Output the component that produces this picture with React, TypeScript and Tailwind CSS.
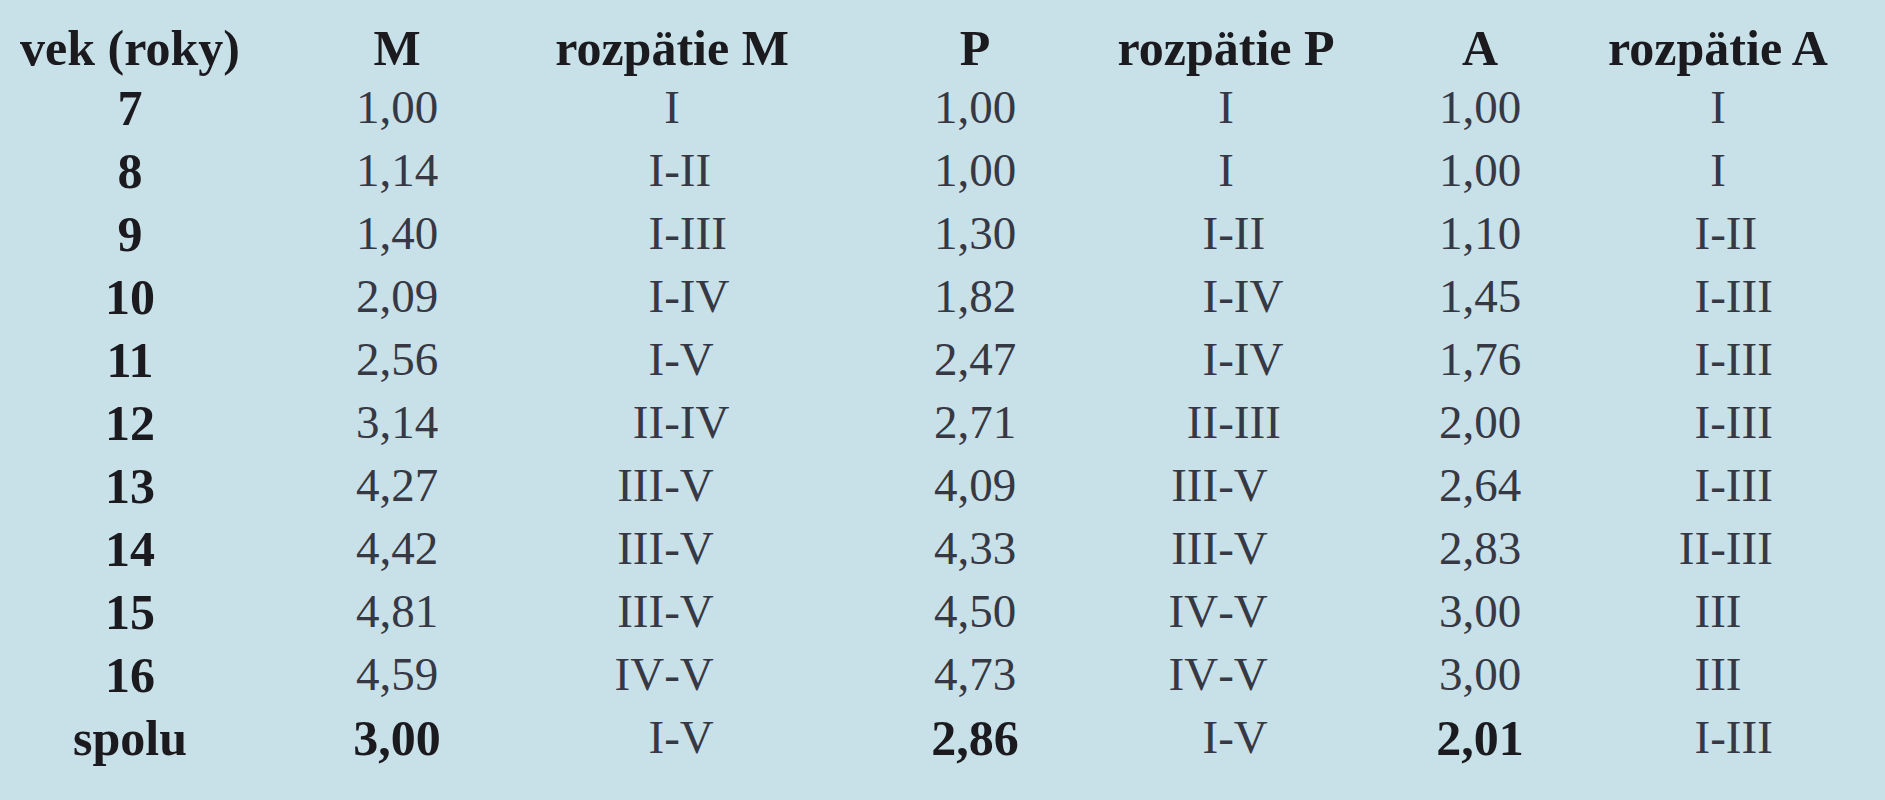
const rows = [
  { age: '7', m: '1,00', rm: ['I'], p: '1,00', rp: ['I'], a: '1,00', ra: ['I'] },
  { age: '8', m: '1,14', rm: ['I', 'II'], p: '1,00', rp: ['I'], a: '1,00', ra: ['I'] },
  { age: '9', m: '1,40', rm: ['I', 'III'], p: '1,30', rp: ['I', 'II'], a: '1,10', ra: ['I', 'II'] },
  { age: '10', m: '2,09', rm: ['I', 'IV'], p: '1,82', rp: ['I', 'IV'], a: '1,45', ra: ['I', 'III'] },
  { age: '11', m: '2,56', rm: ['I', 'V'], p: '2,47', rp: ['I', 'IV'], a: '1,76', ra: ['I', 'III'] },
  { age: '12', m: '3,14', rm: ['II', 'IV'], p: '2,71', rp: ['II', 'III'], a: '2,00', ra: ['I', 'III'] },
  { age: '13', m: '4,27', rm: ['III', 'V'], p: '4,09', rp: ['III', 'V'], a: '2,64', ra: ['I', 'III'] },
  { age: '14', m: '4,42', rm: ['III', 'V'], p: '4,33', rp: ['III', 'V'], a: '2,83', ra: ['II', 'III'] },
  { age: '15', m: '4,81', rm: ['III', 'V'], p: '4,50', rp: ['IV', 'V'], a: '3,00', ra: ['III'] },
  { age: '16', m: '4,59', rm: ['IV', 'V'], p: '4,73', rp: ['IV', 'V'], a: '3,00', ra: ['III'] },
];

const total = { age: 'spolu', m: '3,00', rm: ['I', 'V'], p: '2,86', rp: ['I', 'V'], a: '2,01', ra: ['I', 'III'] };

const Cell = ({ children, bold }: { children: React.ReactNode; bold?: boolean }) => (
  <div
    className={`flex items-center justify-center whitespace-nowrap leading-none ${
      bold ? 'font-bold text-[50px] text-[#1b1a1f]' : 'text-[47px] text-[#363844]'
    }`}
  >
    {children}
  </div>
);

// ranges are lined up on the hyphen
const Range = ({ parts }: { parts: string[] }) => (
  <div className="flex items-center justify-center whitespace-nowrap leading-none text-[47px] text-[#363844]">
    {parts.length === 1 ? (
      <span>{parts[0]}</span>
    ) : (
      <div className="grid grid-cols-[90px_auto_90px] items-center">
        <span className="text-right">{parts[0]}</span>
        <span>-</span>
        <span className="text-left">{parts[1]}</span>
      </div>
    )}
  </div>
);

export default function App() {
  const all = [...rows, total];
  return (
    <div
      className="w-full h-[800px] bg-[#c8e0e7] pt-[19px]"
      style={{ fontFamily: '"Liberation Serif", "Times New Roman", serif' }}
    >
      <div className="grid grid-cols-[260px_274px_276px_330px_172px_336px_140px] grid-rows-[57px_repeat(11,63px)]">
        <Cell bold>vek (roky)</Cell>
        <Cell bold>M</Cell>
        <Cell bold>rozpätie M</Cell>
        <Cell bold>P</Cell>
        <Cell bold>rozpätie P</Cell>
        <Cell bold>A</Cell>
        <Cell bold>rozpätie A</Cell>

        {all.map((r, i) => {
          const last = i === all.length - 1;
          return [
            <Cell key={`${i}-age`} bold>{r.age}</Cell>,
            <Cell key={`${i}-m`} bold={last}>{r.m}</Cell>,
            <Range key={`${i}-rm`} parts={r.rm} />,
            <Cell key={`${i}-p`} bold={last}>{r.p}</Cell>,
            <Range key={`${i}-rp`} parts={r.rp} />,
            <Cell key={`${i}-a`} bold={last}>{r.a}</Cell>,
            <Range key={`${i}-ra`} parts={r.ra} />,
          ];
        })}
      </div>
    </div>
  );
}
